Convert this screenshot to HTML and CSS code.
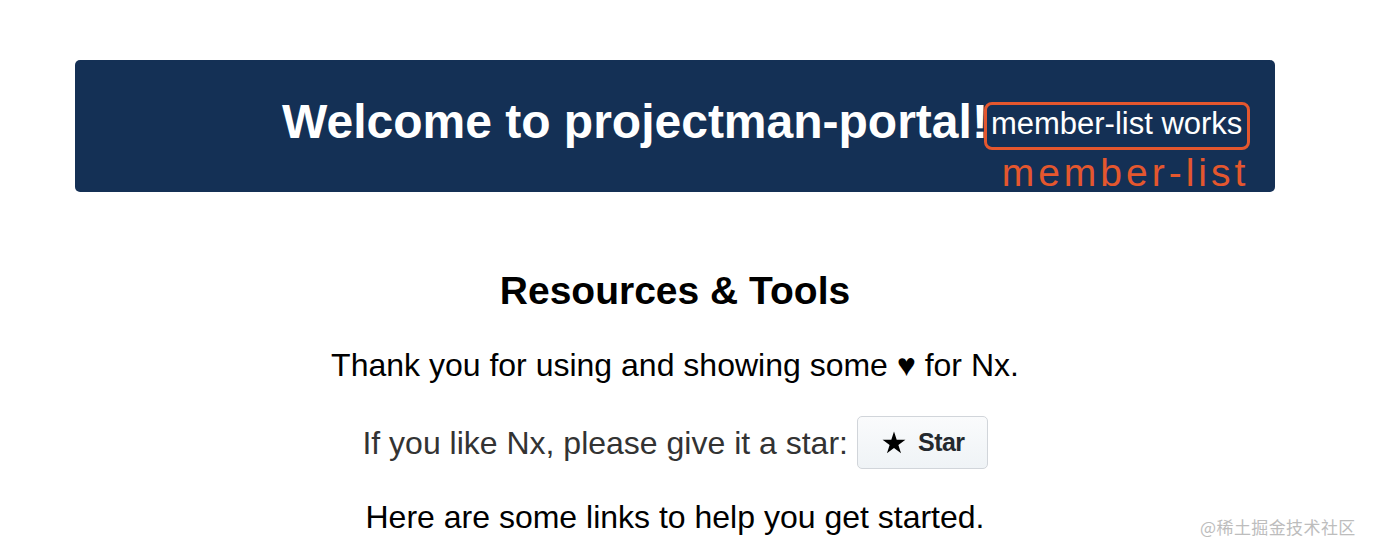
FILE: index.html
```html
<!DOCTYPE html>
<html>
<head>
    <title>ProjectmanPortal</title>
    <meta charset="UTF-8">
    <link rel="stylesheet" href="styles.css">
</head>
<body>
    <div class="page">
        <header class="banner">
            <h1 class="banner-title">Welcome to projectman-portal!</h1>
            <div class="member-list">
                <span class="member-text">member-list works</span>
                <span class="member-tag">member-list</span>
            </div>
        </header>

        <main class="resources">
            <h2 class="resources-title">Resources &amp; Tools</h2>
            <p class="line">Thank you for using and showing some &#9829; for Nx.</p>
            <div class="line star-row">
                <span class="muted">If you like Nx, please give it a star:</span>
                <button type="button" class="star-btn">
                    <svg class="star-icon" width="24" height="24" viewBox="0 0 24 24">
                        <polygon points="12,0.5 14.7,8.78 23.41,8.79 16.37,13.92 19.05,22.21 12,17.1 4.95,22.21 7.63,13.92 0.59,8.79 9.3,8.78" fill="#000"/>
                    </svg>
                    Star
                </button>
            </div>
            <p class="line last">Here are some links to help you get started.</p>
        </main>
    </div>

    <div class="watermark">@稀土掘金技术社区</div>
</body>
</html>
```

FILE: styles.css
```css
body {
    margin: 0;
    font-family: "Liberation Sans", Arial, sans-serif;
    background-color: #fff;
    color: #000;
}

.page {
    width: 1200px;
    margin-left: 75px;
    padding-top: 60px;
}

/* dark header with title + component outline */
.banner {
    display: flex;
    align-items: flex-start;
    box-sizing: border-box;
    height: 132px;
    padding: 38px 0 0 207px;
    background-color: #143055;
    border-radius: 5px;
    color: #fff;
}

.banner-title {
    margin: 0;
    font-size: 48px;
    line-height: 48px;
    font-weight: bold;
}

.member-list {
    position: relative;
    margin: 4px 0 0 -4px;
    padding: 0 5px 5px 4px;
    border: 3px solid #e4572e;
    border-radius: 8px;
}

.member-text {
    display: block;
    font-size: 31px;
    line-height: 37px;
}

.member-tag {
    position: absolute;
    top: 49px;
    right: -2px;
    font-size: 39px;
    line-height: 38px;
    letter-spacing: 4px;
    color: #e4572e;
    white-space: nowrap;
}

.resources {
    display: flex;
    flex-direction: column;
    align-items: center;
    margin-top: 77px;
}

.resources-title {
    margin: 0 0 34px;
    font-size: 39px;
    line-height: 44px;
}

.line {
    margin: 0;
    font-size: 32px;
    line-height: 36px;
}

.star-row {
    display: flex;
    align-items: center;
    margin-top: 33px;
}

.muted {
    color: #333;
}

.star-btn {
    display: flex;
    align-items: center;
    gap: 12px;
    box-sizing: border-box;
    height: 53px;
    margin-left: 9px;
    padding: 0 22px 0 24px;
    border: 1px solid #d1d5da;
    border-radius: 5px;
    background: linear-gradient(#fafbfc, #eff3f6);
    font-family: "Liberation Sans", Arial, sans-serif;
    font-size: 25px;
    font-weight: bold;
    letter-spacing: -0.5px;
    color: #24292e;
}

.star-icon {
    display: block;
}

.line.last {
    margin-top: 30px;
}

.watermark {
    position: absolute;
    left: 1200px;
    top: 514px;
    font-family: "Noto Sans CJK SC", sans-serif;
    font-size: 17px;
    letter-spacing: 0.4px;
    color: #bdbdbd;
}
```
